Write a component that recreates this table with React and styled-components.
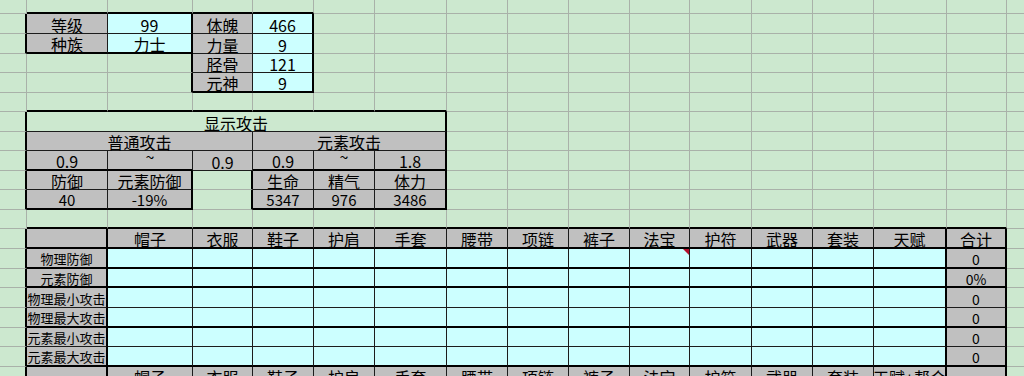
import React from "react"
import styled, { createGlobalStyle, css } from "styled-components"

const GlobalStyle = createGlobalStyle`
  html, body {
    margin: 0;
    padding: 0;
    background: #cce8cf;
    overflow: hidden;
  }
  body {
    font-family: "Noto Sans CJK SC", "Noto Sans", sans-serif;
    color: #000;
  }
`

// sheet geometry, measured off the screen grab
const colWidths = [27, 81, 85, 60, 61, 61, 72, 61, 61, 61, 60, 62, 61, 61, 73, 60, 60]
const rowHeights = [14, 20, 20, 19, 20, 19, 20, 19, 20, 19, 20, 19, 20, 20, 19, 20, 20, 19, 20, 20]

const GRAY = "#c0c0c0"
const CYAN = "#ccffff"

const edgeCss = {
  grid: "1px solid #a9b1a9",
  thin: "1px solid #1c1c1c",
  thick: "2px solid #000",
  none: "0 none",
}

const Sheet = styled.div`
  display: grid;
  grid-template-columns: ${colWidths.map(w => w + "px").join(" ")};
  grid-template-rows: ${rowHeights.map(h => h + "px").join(" ")};
  width: 1024px;
  height: 376px;
  overflow: hidden;
  background: #cce8cf;
`

const Cell = styled.div`
  grid-row: ${p => p.$r + 1} / span ${p => p.$rs};
  grid-column: ${p => p.$c + 1} / span ${p => p.$cs};
  position: relative;
  box-sizing: border-box;
  display: flex;
  align-items: center;
  justify-content: center;
  white-space: nowrap;
  background: ${p => p.$bg || "transparent"};
  border-right: ${p => edgeCss[p.$right]};
  border-bottom: ${p => edgeCss[p.$bottom]};
  font-size: ${p => p.$size}px;
  line-height: 16px;
  padding-top: 2px;

  ${p => p.$note && css`
    &::after {
      content: "";
      position: absolute;
      top: 0;
      right: 0;
      border-style: solid;
      border-width: 0 6px 6px 0;
      border-color: transparent #b3102c transparent transparent;
    }
  `}
`

// the tilde sits high in the cell, as it does in the sheet's font
const Tilde = styled.span`
  display: inline-block;
  transform: translateY(-5px);
`

const R = rowHeights.length
const C = colWidths.length

// H[r][c] = line under row r, V[r][c] = line right of column c
const H = Array.from({ length: R }, () => Array(C).fill("grid"))
const V = Array.from({ length: R }, () => Array(C).fill("grid"))

const inner = (r1, c1, r2, c2, kind) => {
  for (let r = r1; r <= r2; r++)
    for (let c = c1; c <= c2; c++) {
      if (r < r2) H[r][c] = kind
      if (c < c2) V[r][c] = kind
    }
}

const box = (r1, c1, r2, c2, kind) => {
  for (let c = c1; c <= c2; c++) {
    if (r1 > 0) H[r1 - 1][c] = kind
    H[r2][c] = kind
  }
  for (let r = r1; r <= r2; r++) {
    if (c1 > 0) V[r][c1 - 1] = kind
    V[r][c2] = kind
  }
}

const hline = (r, c1, c2, kind) => {
  for (let c = c1; c <= c2; c++) H[r][c] = kind
}
const vline = (c, r1, r2, kind) => {
  for (let r = r1; r <= r2; r++) V[r][c] = kind
}

// character sheet
inner(1, 1, 2, 2, "thin")
box(1, 1, 2, 2, "thick")
inner(1, 3, 4, 4, "thin")
box(1, 3, 4, 4, "thick")

// attack block
inner(6, 1, 10, 6, "thin")
box(6, 1, 8, 6, "thick")
box(9, 1, 10, 2, "thick")
box(9, 4, 10, 6, "thick")
H[8][3] = "thin"
H[9][3] = "grid"

// equipment table
inner(12, 1, 19, 15, "thin")
box(12, 1, 19, 15, "thick")
vline(1, 12, 19, "thick")
vline(14, 12, 19, "thick")
;[12, 13, 14, 16, 18].forEach(r => hline(r, 1, 15, "thick"))

const slots = ["帽子", "衣服", "鞋子", "护肩", "手套", "腰带", "项链", "裤子", "法宝", "护符", "武器", "套装", "天赋"]
const stats = [
  ["物理防御", "0"],
  ["元素防御", "0%"],
  ["物理最小攻击", "0"],
  ["物理最大攻击", "0"],
  ["元素最小攻击", "0"],
  ["元素最大攻击", "0"],
]

const cells = [
  { r: 1, c: 1, text: "等级", bg: GRAY },
  { r: 1, c: 2, text: "99", bg: CYAN },
  { r: 1, c: 3, text: "体魄", bg: GRAY },
  { r: 1, c: 4, text: "466", bg: CYAN },
  { r: 2, c: 1, text: "种族", bg: GRAY },
  { r: 2, c: 2, text: "力士", bg: CYAN },
  { r: 2, c: 3, text: "力量", bg: GRAY },
  { r: 2, c: 4, text: "9", bg: CYAN },
  { r: 3, c: 3, text: "胫骨", bg: GRAY },
  { r: 3, c: 4, text: "121", bg: CYAN },
  { r: 4, c: 3, text: "元神", bg: GRAY },
  { r: 4, c: 4, text: "9", bg: CYAN },

  { r: 6, c: 1, cs: 6, text: "显示攻击" },
  { r: 7, c: 1, cs: 3, text: "普通攻击", bg: GRAY },
  { r: 7, c: 4, cs: 3, text: "元素攻击", bg: GRAY },
  ...["0.9", "~", "0.9", "0.9", "~", "1.8"].map((text, i) => ({ r: 8, c: i + 1, text, bg: GRAY })),
  { r: 9, c: 1, text: "防御", bg: GRAY },
  { r: 9, c: 2, text: "元素防御", bg: GRAY },
  { r: 9, c: 4, text: "生命", bg: GRAY },
  { r: 9, c: 5, text: "精气", bg: GRAY },
  { r: 9, c: 6, text: "体力", bg: GRAY },
  { r: 10, c: 1, text: "40", bg: GRAY, size: 15 },
  { r: 10, c: 2, text: "-19%", bg: GRAY, size: 15 },
  { r: 10, c: 4, text: "5347", bg: GRAY, size: 15 },
  { r: 10, c: 5, text: "976", bg: GRAY, size: 15 },
  { r: 10, c: 6, text: "3486", bg: GRAY, size: 15 },

  { r: 12, c: 1, text: "", bg: GRAY },
  ...slots.map((text, i) => ({ r: 12, c: i + 2, text, bg: GRAY })),
  { r: 12, c: 15, text: "合计", bg: GRAY },
  ...stats.flatMap(([label, total], i) => [
    { r: 13 + i, c: 1, text: label, bg: GRAY, size: 13 },
    ...slots.map((_, j) => ({ r: 13 + i, c: j + 2, text: "", bg: CYAN, note: i === 0 && j === 8 })),
    { r: 13 + i, c: 15, text: total, bg: GRAY, size: 14 },
  ]),
  { r: 19, c: 1, text: "", bg: GRAY },
  ...slots.map((text, i) => ({ r: 19, c: i + 2, text: i === 12 ? "天赋+帮会" : text, bg: GRAY })),
  { r: 19, c: 15, text: "", bg: GRAY },
]

const buildSheet = () => {
  const taken = Array.from({ length: R }, () => Array(C).fill(false))
  const out = cells.map(cell => {
    const rs = cell.rs || 1
    const cs = cell.cs || 1
    for (let r = cell.r; r < cell.r + rs; r++)
      for (let c = cell.c; c < cell.c + cs; c++) taken[r][c] = true
    return { ...cell, rs, cs }
  })
  for (let r = 0; r < R; r++)
    for (let c = 0; c < C; c++)
      if (!taken[r][c]) out.push({ r, c, rs: 1, cs: 1, text: "" })
  return out
}

const App = () => {
  const all = buildSheet()
  return <>
    <GlobalStyle />
    <Sheet>
      {all.map(cell => (
        <Cell
          key={`${cell.r}-${cell.c}`}
          $r={cell.r}
          $c={cell.c}
          $rs={cell.rs}
          $cs={cell.cs}
          $bg={cell.bg}
          $size={cell.size || 16}
          $note={cell.note}
          $right={V[cell.r][cell.c + cell.cs - 1]}
          $bottom={H[cell.r + cell.rs - 1][cell.c]}
        >
          {cell.text === "~" ? <Tilde>~</Tilde> : cell.text}
        </Cell>
      ))}
    </Sheet>
  </>
}

export default App
